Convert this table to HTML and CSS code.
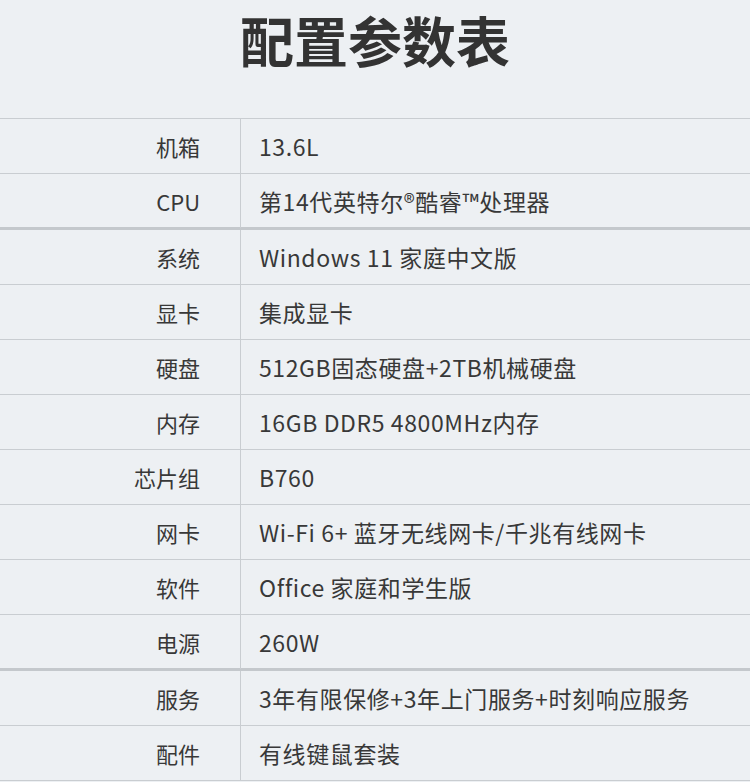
FILE: index.html
```html
<!DOCTYPE html>
<html lang="zh-CN">
<head>
<meta charset="utf-8">
<title>配置参数表</title>
<link rel="stylesheet" href="styles.css">
</head>
<body>
<div class="page">
  <h1 class="title">配置参数表</h1>
  <div class="table">
    <div class="row"><div class="label">机箱</div><div class="value">13.6L</div></div>
    <div class="row thick"><div class="label">CPU</div><div class="value">第14代英特尔®酷睿™处理器</div></div>
    <div class="row"><div class="label">系统</div><div class="value">Windows 11 家庭中文版</div></div>
    <div class="row"><div class="label">显卡</div><div class="value">集成显卡</div></div>
    <div class="row"><div class="label">硬盘</div><div class="value">512GB固态硬盘+2TB机械硬盘</div></div>
    <div class="row"><div class="label">内存</div><div class="value">16GB DDR5 4800MHz内存</div></div>
    <div class="row"><div class="label">芯片组</div><div class="value">B760</div></div>
    <div class="row"><div class="label">网卡</div><div class="value">Wi-Fi 6+ 蓝牙无线网卡/千兆有线网卡</div></div>
    <div class="row"><div class="label">软件</div><div class="value">Office 家庭和学生版</div></div>
    <div class="row thick"><div class="label">电源</div><div class="value">260W</div></div>
    <div class="row"><div class="label">服务</div><div class="value">3年有限保修+3年上门服务+时刻响应服务</div></div>
    <div class="row"><div class="label">配件</div><div class="value">有线键鼠套装</div></div>
  </div>
</div>
</body>
</html>
```

FILE: styles.css
```css
html, body {
  margin: 0;
  padding: 0;
  background: #edf0f3;
}
.page {
  width: 750px;
  height: 782px;
  overflow: hidden;
  font-family: "Noto Sans CJK SC", "Noto Sans", sans-serif;
  color: #383838;
}
.title {
  margin: 0;
  height: 118px;
  box-sizing: border-box;
  padding-top: 7px;
  text-align: center;
  font-size: 54px;
  font-weight: 600;
  line-height: 66px;
  color: #333333;
  letter-spacing: 0;
}
.table {
  border-top: 1px solid #c9cdd1;
}
.row {
  display: grid;
  grid-template-columns: 241px 1fr;
  height: 54px;
  border-bottom: 1px solid #c9cdd1;
}
.row.thick {
  height: 53px;
  border-bottom: 3px solid #c4c8cc;
}
.label {
  border-right: 1px solid #c9cdd1;
  text-align: right;
  padding-right: 40px;
  font-size: 22px;
  line-height: 54px;
}
.value {
  padding-left: 18px;
  font-size: 23px;
  line-height: 54px;
  letter-spacing: 0.6px;
}
```
